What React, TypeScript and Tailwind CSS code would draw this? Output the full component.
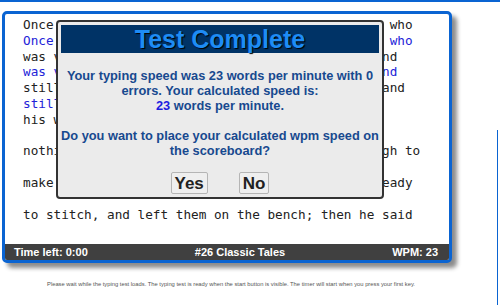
import React from 'react';

const mono = { fontFamily: '"DejaVu Sans Mono", "Liberation Mono", monospace' };
const sans = { fontFamily: '"Liberation Sans", Arial, sans-serif' };

const rows: { text: string; typed: string }[] = [
  { text: 'Once upon a time there was an honest shoemaker, who', typed: 'Once upon a time there was an honest shoemaker, who' },
  { text: 'was very poor. He worked very hard every day, and', typed: 'was very poor. He worked very hard every day, and' },
  { text: 'still he could not earn enough to feed himself and', typed: 'still he could' },
  { text: 'his wife. At last he had', typed: '' },
  { text: 'nothing left in the world but leather just enough to', typed: '' },
  { text: 'make a single pair of shoes. He cut them out, ready', typed: '' },
  { text: 'to stitch, and left them on the bench; then he said', typed: '' },
];

export default function App() {
  return (
    <div className="relative h-[305px] w-[500px] overflow-hidden bg-white" style={sans}>
      <div className="h-[2px] bg-[#0a64d2]" />

      <div className="ml-[2px] mt-[9px] flex h-[252px] w-[450px] flex-col overflow-hidden rounded-[5px] border-[3px] border-[#0a64d2] bg-white shadow-[5px_5px_4px_rgba(0,0,0,0.45)]">
        <div className="flex-1 pl-[18px] pt-[3px] text-[12.7px] leading-[15.8px] text-[#222]" style={mono}>
          {rows.map((r, i) => (
            <div key={i}>
              <div className="whitespace-pre">{r.text}</div>
              <div className="h-[15.8px] whitespace-pre text-[#2323d8]">{r.typed}</div>
            </div>
          ))}
        </div>
        <div className="flex h-[16px] items-center justify-between bg-[#404040] pl-[9px] pr-[11px] text-[11px] font-bold text-white">
          <span>Time left: 0:00</span>
          <span>#26 Classic Tales</span>
          <span>WPM: 23</span>
        </div>
      </div>

      <p className="mt-[17px] w-[462px] text-center text-[5.8px] text-[#555]">
        Please wait while the typing test loads. The typing test is ready when the start button is visible. The timer will start when you press your first key.
      </p>

      <div className="absolute right-[2px] top-[130px] h-[175px] w-px bg-[#0a64d2]" />

      <div className="absolute left-[56px] top-[20px] flex h-[179px] w-[328px] flex-col rounded-[4px] border-2 border-[#333] bg-[#ebebeb] p-[3px]">
        <div className="flex h-[28px] items-center justify-center bg-[#003366]">
          <h1 className="text-[25px] font-bold leading-none text-[#1e8cf5] [text-shadow:1px_1px_1px_#000]">
            Test Complete
          </h1>
        </div>
        <div className="-mx-[3px] mt-[15px] text-center text-[12.8px] font-bold leading-[15px] text-[#17498f]">
          <p>Your typing speed was 23 words per minute with 0 errors. Your calculated speed is:</p>
          <p>
            <span className="text-[#1d1de0]">23</span> words per minute.
          </p>
          <p className="mt-[15px]">Do you want to place your calculated wpm speed on the scoreboard?</p>
        </div>
        <div className="mt-[14px] flex justify-center gap-[31px]">
          <button className="h-[22px] rounded-[2px] border border-[#b5b5b5] bg-[#efefef] px-[3px] text-[17px] font-bold leading-none text-[#222]">
            Yes
          </button>
          <button className="h-[22px] rounded-[2px] border border-[#b5b5b5] bg-[#efefef] px-[3px] text-[17px] font-bold leading-none text-[#222]">
            No
          </button>
        </div>
      </div>
    </div>
  );
}
